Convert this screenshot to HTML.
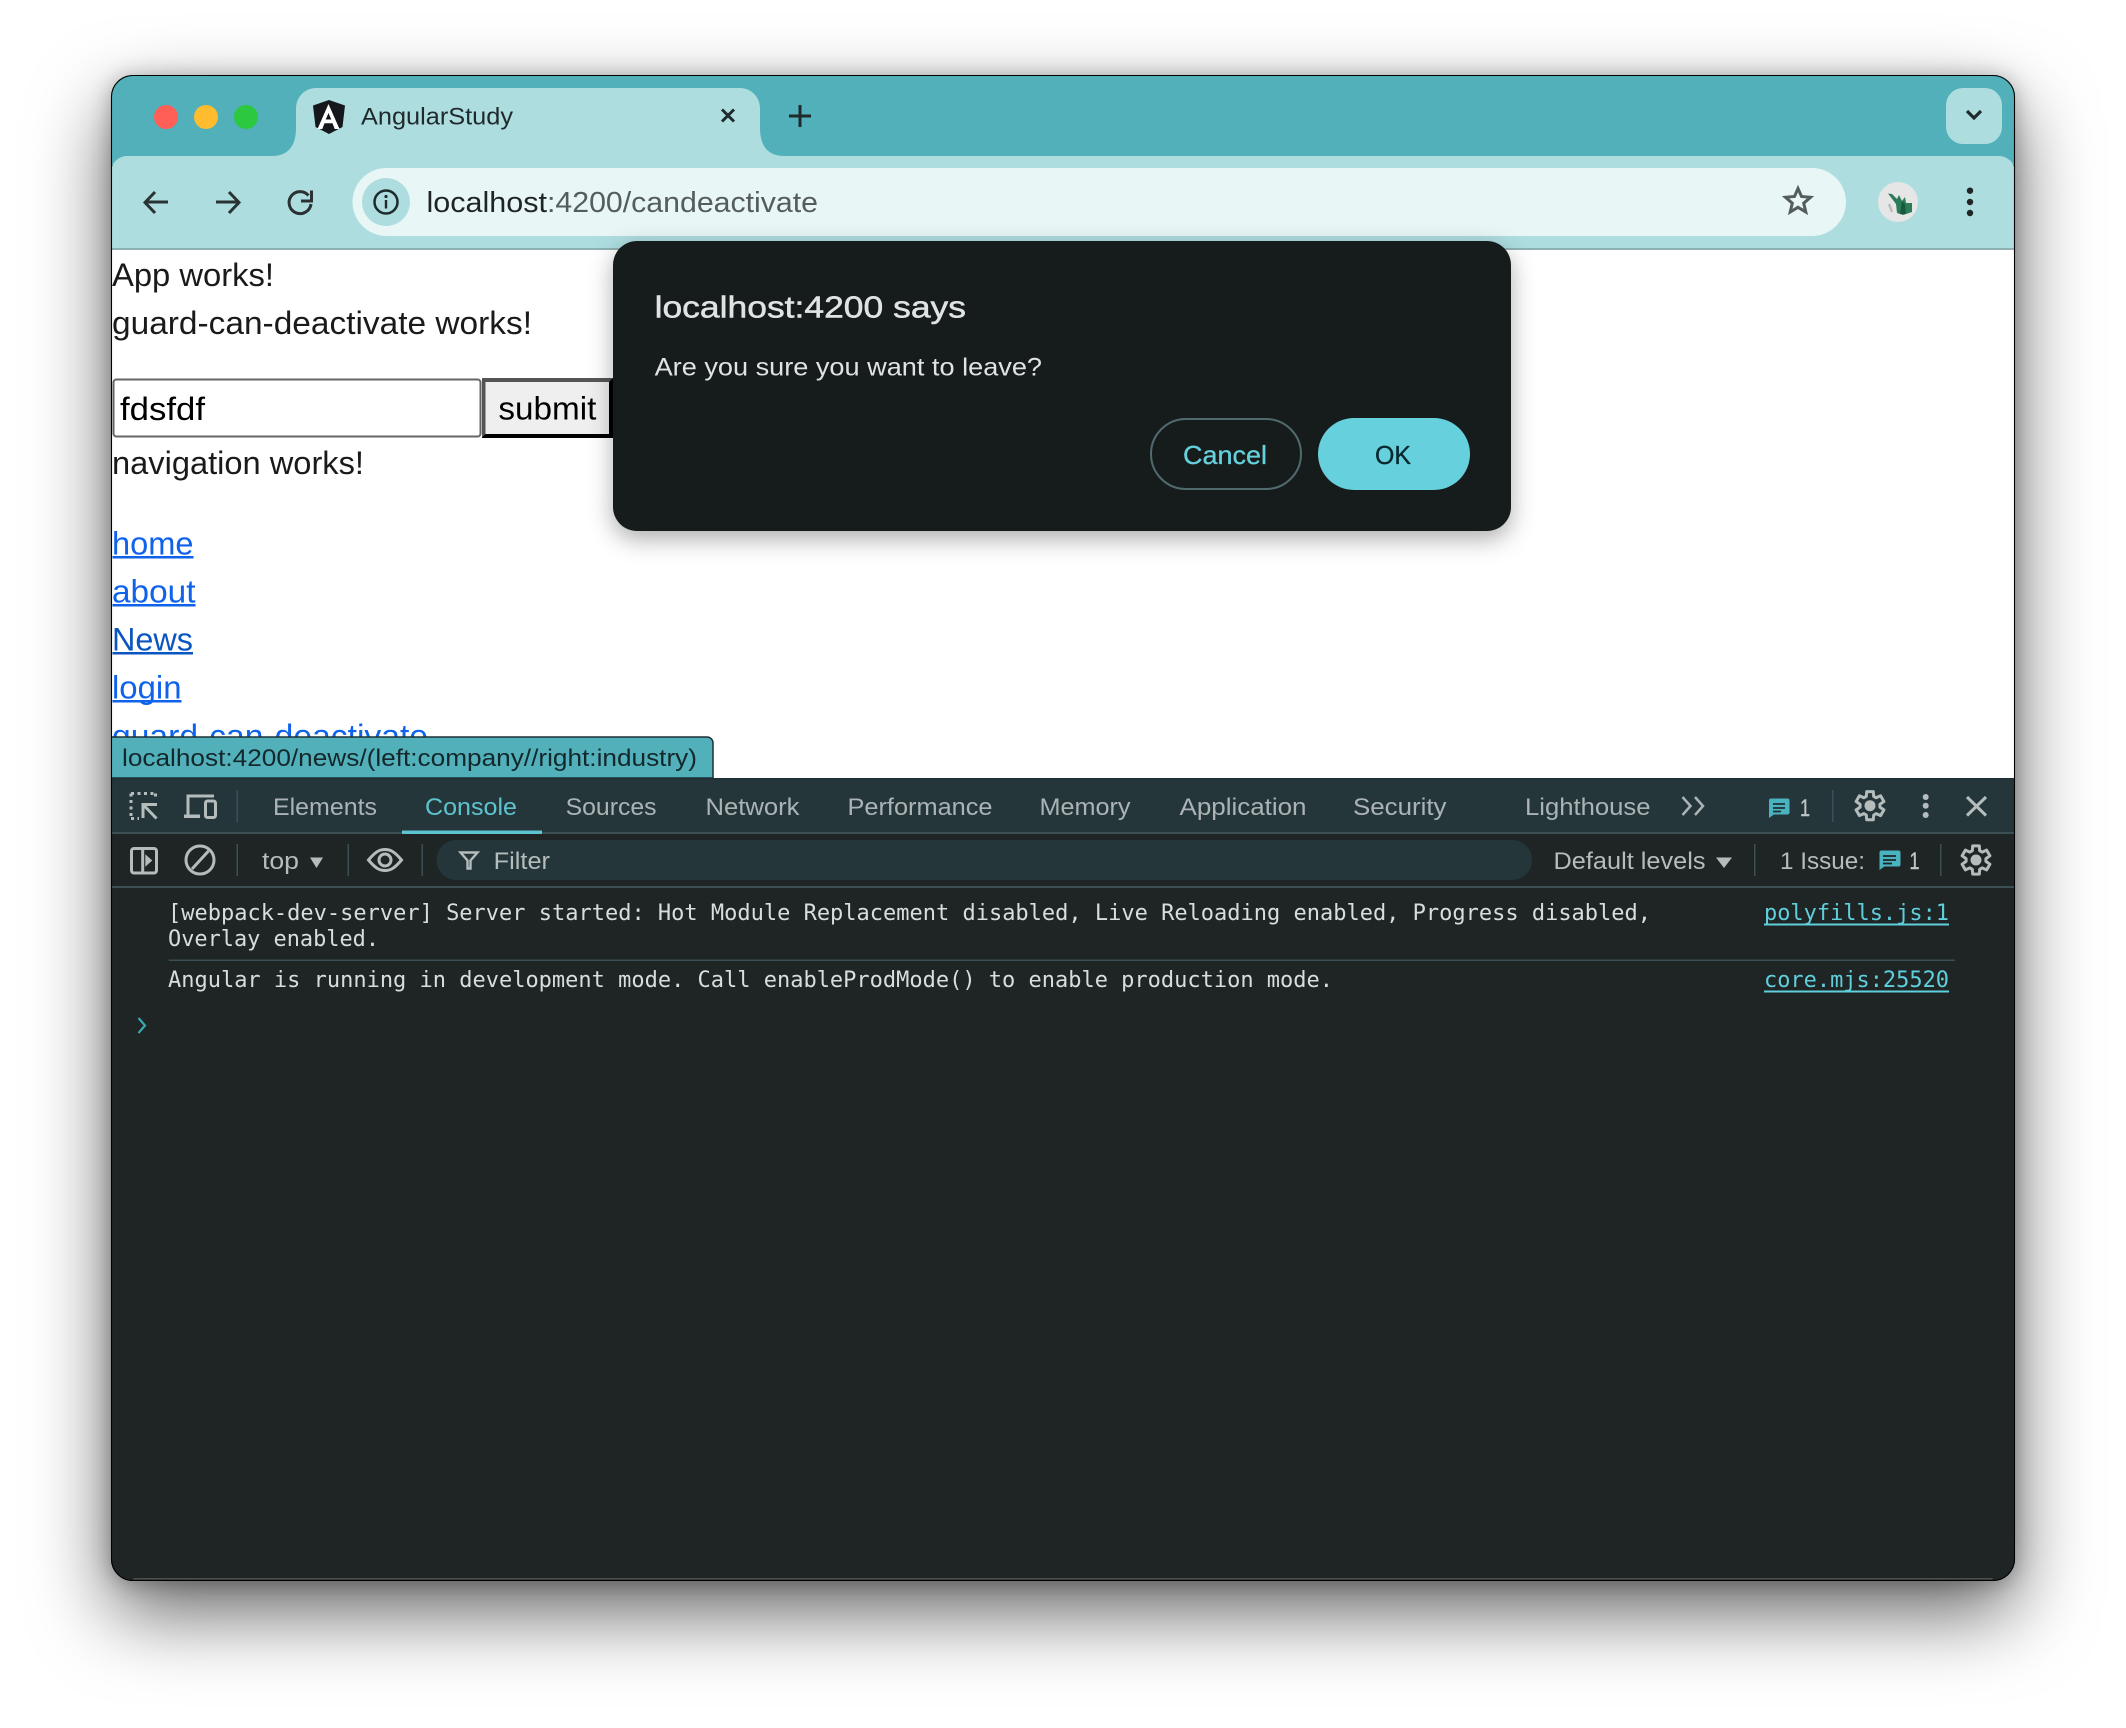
<!DOCTYPE html>
<html lang="en"><head><meta charset="utf-8"><title>AngularStudy</title>
<style>
html,body{margin:0;padding:0;background:#fff;width:2126px;height:1728px;overflow:hidden}
#win{position:absolute;left:111px;top:75px;width:1904px;height:1506px;border-radius:22px;background:#1f2525;box-shadow:0 32px 78px rgba(0,0,0,.6),0 2px 22px rgba(0,0,0,.28)}
svg{position:absolute;left:0;top:0}
text{font-family:"Liberation Sans",Arial,sans-serif;white-space:pre}
.m{font-family:"DejaVu Sans Mono","Liberation Mono",monospace;font-size:22px;fill:#d8dddd}
.p{font-size:32.5px;fill:#1a1a1a}
.l{font-size:32.5px;fill:#0f62ea}
.t{font-size:24.4px;fill:#abb3b4}
.ic{fill:none;stroke:#b4bcbc;stroke-width:3}
</style></head><body>
<div id="win"></div>
<svg width="2126" height="1728" viewBox="0 0 2126 1728" xmlns="http://www.w3.org/2000/svg">
<defs>
<clipPath id="wc"><rect x="111" y="75" width="1904" height="1506" rx="22"/></clipPath>
<filter id="ds" x="-15%" y="-30%" width="130%" height="170%"><feDropShadow dx="0" dy="8" stdDeviation="12" flood-color="#000" flood-opacity=".32"/></filter>
<g id="gear"><path fill="none" stroke="#b4bcbc" stroke-width="3" stroke-linejoin="round" d="M-3.7-9.3-3.3-14.1 3.3-14.1 3.7-9.3 6.2-7.9 10.6-9.9 13.9-4.2 9.9-1.4 9.9 1.4 13.9 4.2 10.6 9.9 6.2 7.9 3.7 9.3 3.3 14.1-3.3 14.1-3.7 9.3-6.2 7.9-10.6 9.9-13.9 4.2-9.9 1.4-9.9-1.4-13.9-4.2-10.6-9.9-6.2-7.9Z"/><circle r="5.5" fill="#b4bcbc"/></g>
</defs>
<g clip-path="url(#wc)">
<!-- strip -->
<rect x="111" y="75" width="1904" height="90" fill="#51b0b9"/>
<!-- toolbar -->
<path d="M111 250V172a16 16 0 0 1 16-16H1999a16 16 0 0 1 16 16V250Z" fill="#aedddf"/>
<!-- tab -->
<path d="M272 156C288 156 296 146 296 128V108a20 20 0 0 1 20-20H740a20 20 0 0 1 20 20V128C760 146 768 156 784 156Z" fill="#aedddf"/>
<rect x="111" y="248" width="1904" height="2.2" fill="#8fb0b2"/>
<circle cx="166" cy="117" r="12" fill="#ff5f57"/><circle cx="206" cy="117" r="12" fill="#febc2e"/><circle cx="246" cy="117" r="12" fill="#2cc840"/>
<path d="M329 100 345 105.500 342.500 127 329 134 315.500 127 313 105.500Z" fill="#14181c"/>
<path fill="#fff" fill-rule="evenodd" d="M329 104 318 129h4.800l2.200-5.800h8l2.200 5.800H340ZM329 113l2.800 6.500h-5.600Z" transform="translate(-.5 0)"/>
<text x="361" y="124.500" font-size="24.400" fill="#1f2a2c" textLength="152" lengthAdjust="spacingAndGlyphs">AngularStudy</text>
<path d="M722 109.500 734 121.500M734 109.500 722 121.500" stroke="#1f2a2c" stroke-width="3" fill="none"/>
<path d="M800 105V127M789 116H811" stroke="#1f2a2c" stroke-width="3" fill="none"/>
<rect x="1946" y="88" width="56" height="56" rx="17" fill="#aedddf"/>
<path d="M1967 111l7 7 7-7" stroke="#1f2a2c" stroke-width="3.200" fill="none"/>
<!-- nav -->
<path d="M168 202H146M155 192 145 202.500 155 213" stroke="#2a3233" stroke-width="3" fill="none"/>
<path d="M216 202H238M229 192 239 202.500 229 213" stroke="#2a3233" stroke-width="3" fill="none"/>
<path d="M308.500 195.500A11 11 0 1 0 311 204M311.500 190.500v10.500h-10.500" stroke="#2a3233" stroke-width="3" fill="none"/>
<rect x="352.500" y="168" width="1493.500" height="68" rx="34" fill="#e8f6f6"/>
<circle cx="386" cy="202" r="24" fill="#aedddf"/>
<circle cx="386" cy="202" r="11.500" fill="none" stroke="#1f2a2c" stroke-width="2.500"/>
<rect x="384.800" y="200" width="2.400" height="8.500" fill="#1f2a2c"/><circle cx="386" cy="196.500" r="1.600" fill="#1f2a2c"/>
<text x="426.500" y="212" font-size="28.400" fill="#1f2526" textLength="120.500" lengthAdjust="spacingAndGlyphs">localhost</text>
<text x="547" y="212" font-size="28.400" fill="#555c5e" textLength="271" lengthAdjust="spacingAndGlyphs">:4200/candeactivate</text>
<path d="M1798 188.500 1801.500 196.500 1810.500 197.300 1803.700 203.200 1805.800 212 1798 207.300 1790.200 212 1792.300 203.200 1785.500 197.300 1794.500 196.500Z" fill="none" stroke="#555c5e" stroke-width="3"/>
<circle cx="1898" cy="202" r="20" fill="#e6e6e6"/>
<path d="M1897 213 1896 204 1888 193.500 1892 194 1897 199 1899 195 1902 201 1905 197 1906 203 1912 203 1912 212 1903 215Z" fill="#2b7d58"/>
<path d="M1900 214 1902 201 1905 204 1906 214Z" fill="#1a5a3c"/>
<path d="M1889 204 1892 212" stroke="#bcbcbc" stroke-width="2.500"/>
<circle cx="1970" cy="190.700" r="3.200" fill="#1f2526"/><circle cx="1970" cy="202" r="3.200" fill="#1f2526"/><circle cx="1970" cy="213" r="3.200" fill="#1f2526"/>
<!-- page -->
<rect x="111" y="250" width="1904" height="529" fill="#fff"/>
<text class="p" x="112" y="286" textLength="162" lengthAdjust="spacingAndGlyphs">App works!</text>
<text class="p" x="112" y="334" textLength="420" lengthAdjust="spacingAndGlyphs">guard-can-deactivate works!</text>
<rect x="113.500" y="379.500" width="367" height="57" rx="3" fill="#fff" stroke="#666" stroke-width="2"/>
<text x="120" y="420" font-size="32.500" fill="#000" textLength="85" lengthAdjust="spacingAndGlyphs">fdsfdf</text>
<rect x="482" y="378" width="131" height="60" fill="#000"/>
<path d="M482 378H613L609 382H485.500V434L482 437.500Z" fill="#555"/>
<rect x="485.500" y="382" width="123.500" height="52" fill="#efefef"/>
<text x="498.400" y="419.500" font-size="32.500" fill="#000" textLength="98" lengthAdjust="spacingAndGlyphs">submit</text>
<text class="p" x="112" y="474" textLength="252" lengthAdjust="spacingAndGlyphs">navigation works!</text>
<text class="l" x="112" y="554.500" textLength="81.500" lengthAdjust="spacingAndGlyphs">home</text><rect x="112.500" y="556" width="81" height="2.500" fill="#0f62ea"/>
<text class="l" x="112" y="602.500" textLength="83.500" lengthAdjust="spacingAndGlyphs">about</text><rect x="112.500" y="604" width="83" height="2.500" fill="#0f62ea"/>
<text class="p" style="fill:#0b55c0" x="112" y="650.500" textLength="81" lengthAdjust="spacingAndGlyphs">News</text><rect x="112.500" y="652" width="80.500" height="2.500" fill="#0b55c0"/>
<text class="l" x="112" y="698.500" textLength="69.500" lengthAdjust="spacingAndGlyphs">login</text><rect x="112.500" y="700" width="69" height="2.500" fill="#0f62ea"/>
<text class="l" x="112" y="747" textLength="316" lengthAdjust="spacingAndGlyphs">guard-can-deactivate</text>
<path d="M111 737H707a6 6 0 0 1 6 6V778H111Z" fill="#51b0b9" stroke="#1c3035" stroke-width="1.500"/>
<text x="122" y="766" font-size="24.400" fill="#14282c" textLength="575" lengthAdjust="spacingAndGlyphs">localhost:4200/news/(left:company//right:industry)</text>
<!-- devtools -->
<rect x="111" y="778" width="1904" height="54" fill="#25363b"/>
<rect x="111" y="778" width="1904" height="1.500" fill="#1c3035"/>
<rect x="111" y="832" width="1904" height="2" fill="#3a5054"/>
<rect x="111" y="834" width="1904" height="747" fill="#1f2525"/>
<rect x="111" y="886" width="1904" height="2" fill="#3a5054"/>
<rect x="402" y="830.500" width="140" height="3.500" fill="#5cc3cf"/>
<rect x="236.500" y="790" width="1.500" height="32" fill="#3a5054"/>
<text class="t" x="273" y="815" textLength="104" lengthAdjust="spacingAndGlyphs">Elements</text>
<text class="t" style="fill:#5cc3cf" x="425" y="815" textLength="92" lengthAdjust="spacingAndGlyphs">Console</text>
<text class="t" x="565.600" y="815" textLength="91" lengthAdjust="spacingAndGlyphs">Sources</text>
<text class="t" x="705.500" y="815" textLength="94" lengthAdjust="spacingAndGlyphs">Network</text>
<text class="t" x="847.500" y="815" textLength="145" lengthAdjust="spacingAndGlyphs">Performance</text>
<text class="t" x="1039.500" y="815" textLength="91" lengthAdjust="spacingAndGlyphs">Memory</text>
<text class="t" x="1179.500" y="815" textLength="127" lengthAdjust="spacingAndGlyphs">Application</text>
<text class="t" x="1353" y="815" textLength="93.500" lengthAdjust="spacingAndGlyphs">Security</text>
<text class="t" x="1525" y="815" textLength="125.500" lengthAdjust="spacingAndGlyphs">Lighthouse</text>
<path d="M131 793.500H157M131 793.500V819" class="ic" stroke-dasharray="3 3.500"/>
<path d="M155.500 793.500V800M131 818.500H139" class="ic" stroke-dasharray="3 3.500"/>
<path d="M157 804.500H143V818M143 804.500 156.500 818.500" class="ic"/>
<path d="M188 816V796H214M184 816.500H200" class="ic"/><rect x="184" y="814.500" width="16" height="3.500" fill="#b4bcbc"/>
<rect x="205.500" y="801" width="10" height="16.500" rx="2" class="ic"/>
<path d="M1682.500 797l8 9-8 9M1695 797l8 9-8 9" stroke="#abb3b4" stroke-width="2.500" fill="none"/>
<path d="M1771.500 798.500h16q2 0 2 2v12q0 2-2 2h-13.500l-5 3.500v-17.500q0-2 2.500-2z" fill="#4ab3c0"/>
<path d="M1773 804h12M1773 808h12M1773 811.500h8" stroke="#1c3035" stroke-width="1.800"/>
<text class="t" style="fill:#c0c6c6" stroke="#c0c6c6" stroke-width=".4" x="1800" y="816" font-size="26" textLength="10" lengthAdjust="spacingAndGlyphs">1</text>
<rect x="1832" y="790" width="1.500" height="32" fill="#3a5054"/>
<use href="#gear" transform="translate(1870 805.700)"/>
<circle cx="1925.700" cy="797" r="3" fill="#b4bcbc"/><circle cx="1925.700" cy="805.700" r="3" fill="#b4bcbc"/><circle cx="1925.700" cy="815" r="3" fill="#b4bcbc"/>
<path d="M1967 797 1986 815.500M1986 797 1967 815.500" class="ic"/>
<!-- toolbar 2 -->
<rect x="131.500" y="848.500" width="25" height="24.500" rx="2.500" class="ic"/><path d="M142.700 848V873" class="ic"/><path d="M145.300 854.300V866.700L152.300 860.500Z" fill="#b4bcbc"/>
<circle cx="200" cy="860" r="14" class="ic"/><path d="M192 869 208.500 851" class="ic"/>
<rect x="236.500" y="844" width="1.500" height="32" fill="#3a5054"/>
<text class="t" style="fill:#b4bcbc" x="262" y="869" textLength="37" lengthAdjust="spacingAndGlyphs">top</text>
<path d="M310 857.500H323L316.500 868Z" fill="#b4bcbc"/>
<rect x="347.500" y="844" width="1.500" height="32" fill="#3a5054"/>
<path d="M368.500 860C376 851 380 849.500 385 849.500S394 851 401.500 860C394 869 390 870.500 385 870.500S376 869 368.500 860Z" class="ic"/><circle cx="385" cy="860" r="6" class="ic"/>
<rect x="421.500" y="844" width="1.500" height="32" fill="#3a5054"/>
<rect x="436.500" y="840" width="1095.500" height="40" rx="20" fill="#25363b"/>
<path d="M460.500 852.500H477.500L470.500 860.500V868.500H467.500V860.500Z" fill="none" stroke="#b4bcbc" stroke-width="2.400"/>
<text class="t" style="fill:#b4bcbc" x="493.700" y="869" textLength="56.300" lengthAdjust="spacingAndGlyphs">Filter</text>
<text class="t" style="fill:#b4bcbc" x="1553.500" y="869" textLength="152" lengthAdjust="spacingAndGlyphs">Default levels</text>
<path d="M1716 857.500H1732L1724 868Z" fill="#b4bcbc"/>
<rect x="1754" y="844" width="1.500" height="32" fill="#3a5054"/>
<text class="t" style="fill:#b4bcbc" x="1780" y="869" textLength="85" lengthAdjust="spacingAndGlyphs">1 Issue:</text>
<path d="M1881.500 850.500h17q2 0 2 2v12q0 2-2 2h-14l-5 3.500v-17.500q0-2 2-2z" fill="#4ab3c0"/>
<path d="M1883 856h13M1883 860h13M1883 863.500h9" stroke="#1f2525" stroke-width="1.800"/>
<text class="t" style="fill:#c0c6c6" stroke="#c0c6c6" stroke-width=".4" x="1909.500" y="869" font-size="26" textLength="10" lengthAdjust="spacingAndGlyphs">1</text>
<rect x="1940" y="844" width="1.500" height="32" fill="#3a5054"/>
<use href="#gear" transform="translate(1976 860)"/>
<!-- console -->
<text class="m" x="168" y="920" textLength="1483" lengthAdjust="spacingAndGlyphs">[webpack-dev-server] Server started: Hot Module Replacement disabled, Live Reloading enabled, Progress disabled,</text>
<text class="m" x="168" y="946" textLength="211" lengthAdjust="spacingAndGlyphs">Overlay enabled.</text>
<rect x="168.700" y="959.500" width="1786.300" height="1.500" fill="#3a5054"/>
<text class="m" x="168" y="987" textLength="1165" lengthAdjust="spacingAndGlyphs">Angular is running in development mode. Call enableProdMode() to enable production mode.</text>
<text class="m" style="fill:#5fcfdc" x="1764" y="920" textLength="185" lengthAdjust="spacingAndGlyphs">polyfills.js:1</text><rect x="1764" y="923.500" width="185" height="2" fill="#5fcfdc"/>
<text class="m" style="fill:#5fcfdc" x="1764" y="987" textLength="185" lengthAdjust="spacingAndGlyphs">core.mjs:25520</text><rect x="1764" y="990.500" width="185" height="2" fill="#5fcfdc"/>
<path d="M138.500 1018 145 1025.500 138.500 1033" stroke="#3aa7b5" stroke-width="2.200" fill="none"/>
</g>
<rect x="111.500" y="75.500" width="1903" height="1505" rx="21.500" fill="none" stroke="#000" stroke-width="1.100"/>
<path d="M133.500 1578.700H1992.500" fill="none" stroke="#4a4f4f" stroke-width="1.500"/>
<!-- dialog -->
<rect x="613" y="241" width="898" height="290" rx="24" fill="#181f1f" filter="url(#ds)"/>
<text x="654.600" y="317.500" font-size="31" fill="#e1e3e3" stroke="#e1e3e3" stroke-width=".5" textLength="311.400" lengthAdjust="spacingAndGlyphs">localhost:4200 says</text>
<text x="654.600" y="375.500" font-size="25" fill="#e1e3e3" textLength="387.400" lengthAdjust="spacingAndGlyphs">Are you sure you want to leave?</text>
<rect x="1151" y="419" width="150" height="70" rx="35" fill="none" stroke="#516a6e" stroke-width="2"/>
<text x="1183" y="464" font-size="26" fill="#66d0dd" stroke="#66d0dd" stroke-width=".3" textLength="84" lengthAdjust="spacingAndGlyphs">Cancel</text>
<rect x="1318" y="418" width="152" height="72" rx="36" fill="#66d0dd"/>
<text x="1375" y="464" font-size="26" fill="#07282e" stroke="#07282e" stroke-width=".3" textLength="36" lengthAdjust="spacingAndGlyphs">OK</text>
</svg>
</body></html>
